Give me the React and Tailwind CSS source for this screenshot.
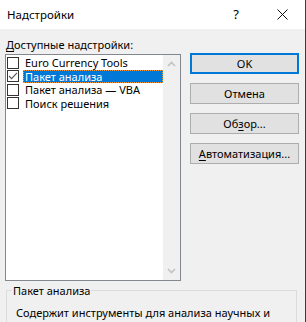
import React from "react";

const ITEMS = [
  { label: "Euro Currency Tools", checked: false },
  { label: "Пакет анализа", checked: true, selected: true },
  { label: "Пакет анализа — VBA", checked: false },
  { label: "Поиск решения", checked: false },
];

function Checkbox({ checked }) {
  return (
    <span className="w-[12px] h-[12px] border border-[#333333] bg-white flex items-center justify-center shrink-0">
      {checked && (
        <svg width="10" height="10" viewBox="0 0 10 10" fill="none">
          <path d="M1 5l2.6 2.7L9 1.8" stroke="#555555" strokeWidth="1.1" />
        </svg>
      )}
    </span>
  );
}

function Chevron({ up }) {
  return (
    <svg width="9" height="6" viewBox="0 0 9 6" fill="none">
      <path d={up ? "M1 5l3.5-3.5L8 5" : "M1 1l3.5 3.5L8 1"} stroke="#c2c2c2" strokeWidth="1.6" />
    </svg>
  );
}

function Button({ children, primary }) {
  return (
    <button
      className={`w-[109px] h-[21px] flex items-center justify-center bg-[#e1e1e1] text-[11px] leading-[14px] text-black ${
        primary ? "border-2 border-[#0078d7]" : "border border-[#adadad]"
      }`}
    >
      {children}
    </button>
  );
}

export default function App() {
  return (
    <div
      className="w-[306px] h-[322px] bg-[#f0f0f0] overflow-hidden border-r border-[#34403b] text-black text-[11px]"
      style={{ fontFamily: '"Segoe UI", "Noto Sans", sans-serif' }}
    >
      {/* Title bar */}
      <div className="h-[29px] bg-white flex items-center pl-[7px] text-[11.5px]">
        <span className="flex-1">Надстройки</span>
        <span className="w-[46px] text-center text-[13px]">?</span>
        <span className="w-[46px] flex justify-center">
          <svg width="11" height="11" viewBox="0 0 11 11" fill="none">
            <path d="M0.5 0.5l10 10M10.5 0.5l-10 10" stroke="#111111" strokeWidth="1" />
          </svg>
        </span>
      </div>

      <div className="flex pl-[5px]">
        {/* Left column */}
        <div className="w-[176px]">
          <div className="h-[25px] pt-[8px] pl-[1px] leading-[15px]">
            <span className="underline underline-offset-2">Д</span>оступные надстройки:
          </div>
          <div className="h-[227px] border border-[#828790] bg-white flex">
            <div className="flex-1 pt-[1px]">
              {ITEMS.map((item) => (
                <div key={item.label} className="h-[13.5px] flex items-center pl-[1px] leading-[13px]">
                  <Checkbox checked={item.checked} />
                  <span
                    className={`ml-[4px] h-[13px] flex items-center ${
                      item.selected
                        ? "flex-1 bg-[#0078d7] text-white border border-dotted border-[#f29a38] pl-[1px]"
                        : "pl-[2px]"
                    }`}
                  >
                    {item.label}
                  </span>
                </div>
              ))}
            </div>
            <div className="w-[17px] bg-[#f0f0f0] flex flex-col items-center justify-between py-[6px]">
              <Chevron up />
              <Chevron />
            </div>
          </div>
        </div>

        {/* Buttons */}
        <div className="ml-[9px] pt-[24px] flex flex-col gap-[9px]">
          <Button primary>OK</Button>
          <Button>Отмена</Button>
          <Button>
            <span>
              Об<span className="underline underline-offset-2">з</span>ор...
            </span>
          </Button>
          <Button>
            <span>
              <span className="underline underline-offset-2">А</span>втоматизация...
            </span>
          </Button>
        </div>
      </div>

      {/* Group box */}
      <fieldset className="ml-[6px] mt-[2px] w-[291px] h-[60px] border border-[#dcdcdc] px-[8px]">
        <legend className="px-[1px] -ml-[3px] leading-[15px]">Пакет анализа</legend>
        <p className="pt-[7px] pl-[1px] leading-[15px]">
          Содержит инструменты для анализа научных и финансовых данных.
        </p>
      </fieldset>
    </div>
  );
}
